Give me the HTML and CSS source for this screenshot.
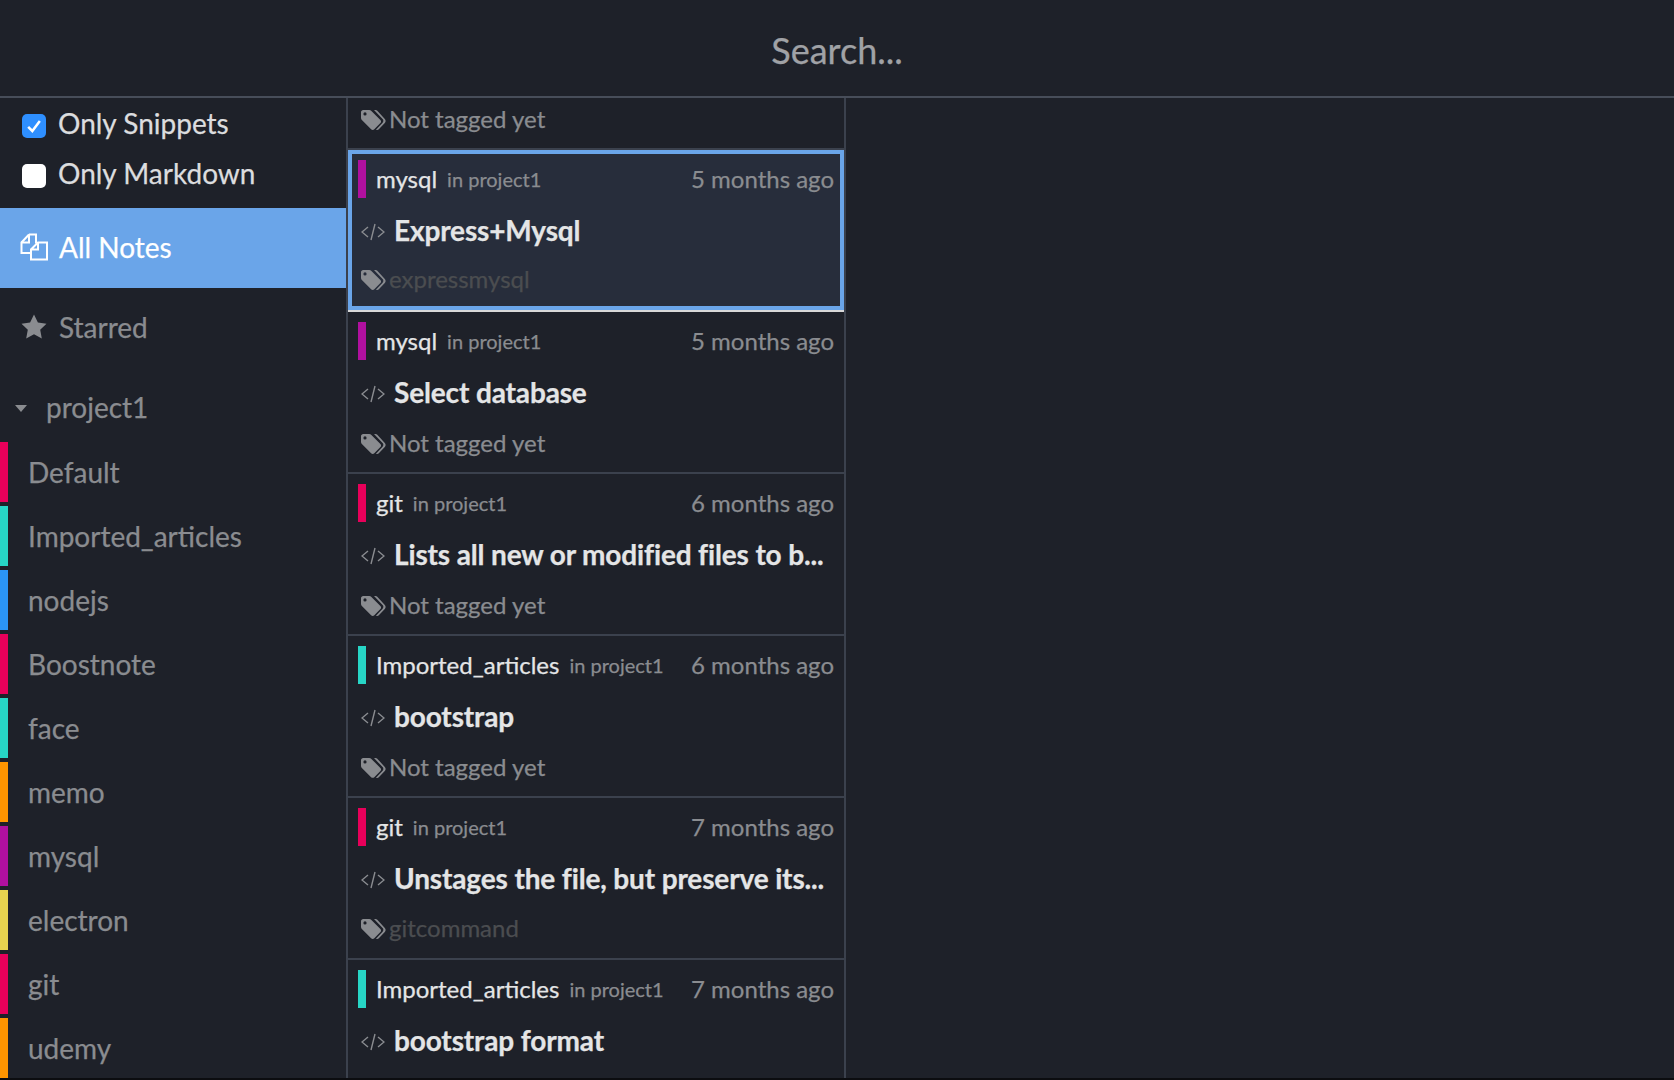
FILE: index.html
```html
<!DOCTYPE html>
<html lang="en">
<head>
    <meta charset="UTF-8">
    <title>Boostnote</title>
    <link rel="stylesheet" href="styles.css">
</head>
<body>
    <svg class="hidden">
        <symbol id="tags" viewBox="0 0 26 22">
            <path d="M1 3.2C1 2 2 1 3.2 1h6c.9 0 1.6.3 2.2.9l9 9c.9.9.9 2.300 0 3.200l-6.100 6.100c-.9.9-2.300.9-3.200 0l-9-9C1.400 10.600 1 9.900 1 9zM5 6.500a1.600 1.600 0 1 0 0-3.200 1.600 1.600 0 0 0 0 3.200z" fill-rule="evenodd"/>
            <path d="M14 1h1.600c.6 0 1.200.3 1.700.7l7.500 8.300c1.100 1.200 1.100 2.800 0 4l-6 6.300c-.8.8-1.800.9-2.800.4l6.600-7c1-1.100 1-2.500 0-3.600z"/>
        </symbol>
        <symbol id="code" viewBox="0 0 24 18">
            <path d="M7 4 1 9l6 5M17 4l6 5-6 5M14 1l-4 16" fill="none" stroke="currentColor" stroke-width="1.400"/>
        </symbol>
    </svg>

    <header class="search-bar">Search...</header>

    <div class="main">
        <aside class="sidebar">
            <div class="filters">
                <label class="filter">
                    <span class="check check-on">
                        <svg viewBox="0 0 24 24" width="20" height="20"><path d="M5 13l5 5 9-12" fill="none" stroke="#fff" stroke-width="3"/></svg>
                    </span>
                    Only Snippets
                </label>
                <label class="filter">
                    <span class="check"></span>
                    Only Markdown
                </label>
            </div>

            <div class="nav-item nav-active">
                <svg class="nav-icon" viewBox="0 0 28 28" width="28" height="28">
                    <path d="M9 1.500h7v7M16 8.500v2M11 20H1.500V9.500L9 1.500" fill="none" stroke="#fff" stroke-width="2"/>
                    <path d="M1.500 9.500H9v-8M18 9.500h9v17H11V16.500zM18 9.500v7h-7" fill="none" stroke="#fff" stroke-width="2"/>
                </svg>
                All Notes
            </div>
            <div class="nav-item">
                <svg class="nav-icon" viewBox="0 0 28 28" width="28" height="28">
                    <path d="M14 1.500l3.900 8 8.600 1.200-6.300 6 1.600 8.800-7.800-4.200-7.800 4.200 1.600-8.800-6.300-6 8.600-1.200z" fill="#8a8c90"/>
                </svg>
                Starred
            </div>
            <div class="nav-item nav-project">
                <span class="caret"></span>
                project1
            </div>

            <ul class="folders">
                <li class="folder c-red">Default</li>
                <li class="folder c-teal">Imported_articles</li>
                <li class="folder c-blue">nodejs</li>
                <li class="folder c-red">Boostnote</li>
                <li class="folder c-teal">face</li>
                <li class="folder c-orange">memo</li>
                <li class="folder c-purple">mysql</li>
                <li class="folder c-yellow">electron</li>
                <li class="folder c-red">git</li>
                <li class="folder c-orange">udemy</li>
            </ul>
        </aside>

        <section class="note-list">
            <div class="note note-cut">
                <div class="note-tags"><svg class="tag-icon" width="26" height="22"><use href="#tags"/></svg>Not tagged yet</div>
            </div>

            <div class="note note-active">
                <div class="note-head">
                    <span class="bar c-purple"></span><span class="note-folder">mysql</span><span class="note-project">in project1</span>
                    <span class="note-time">5 months ago</span>
                </div>
                <div class="note-title"><svg class="code-icon" width="24" height="18"><use href="#code"/></svg>Express+Mysql</div>
                <div class="note-tags note-tagged"><svg class="tag-icon" width="26" height="22"><use href="#tags"/></svg>expressmysql</div>
            </div>

            <div class="note">
                <div class="note-head">
                    <span class="bar c-purple"></span><span class="note-folder">mysql</span><span class="note-project">in project1</span>
                    <span class="note-time">5 months ago</span>
                </div>
                <div class="note-title"><svg class="code-icon" width="24" height="18"><use href="#code"/></svg>Select database</div>
                <div class="note-tags"><svg class="tag-icon" width="26" height="22"><use href="#tags"/></svg>Not tagged yet</div>
            </div>

            <div class="note">
                <div class="note-head">
                    <span class="bar c-red"></span><span class="note-folder">git</span><span class="note-project">in project1</span>
                    <span class="note-time">6 months ago</span>
                </div>
                <div class="note-title"><svg class="code-icon" width="24" height="18"><use href="#code"/></svg>Lists all new or modified files to b...</div>
                <div class="note-tags"><svg class="tag-icon" width="26" height="22"><use href="#tags"/></svg>Not tagged yet</div>
            </div>

            <div class="note">
                <div class="note-head">
                    <span class="bar c-teal"></span><span class="note-folder">Imported_articles</span><span class="note-project">in project1</span>
                    <span class="note-time">6 months ago</span>
                </div>
                <div class="note-title"><svg class="code-icon" width="24" height="18"><use href="#code"/></svg>bootstrap</div>
                <div class="note-tags"><svg class="tag-icon" width="26" height="22"><use href="#tags"/></svg>Not tagged yet</div>
            </div>

            <div class="note">
                <div class="note-head">
                    <span class="bar c-red"></span><span class="note-folder">git</span><span class="note-project">in project1</span>
                    <span class="note-time">7 months ago</span>
                </div>
                <div class="note-title"><svg class="code-icon" width="24" height="18"><use href="#code"/></svg>Unstages the file, but preserve its...</div>
                <div class="note-tags note-tagged"><svg class="tag-icon" width="26" height="22"><use href="#tags"/></svg>gitcommand</div>
            </div>

            <div class="note">
                <div class="note-head">
                    <span class="bar c-teal"></span><span class="note-folder">Imported_articles</span><span class="note-project">in project1</span>
                    <span class="note-time">7 months ago</span>
                </div>
                <div class="note-title"><svg class="code-icon" width="24" height="18"><use href="#code"/></svg>bootstrap format</div>
            </div>
        </section>

        <div class="detail"></div>
    </div>
</body>
</html>
```

FILE: styles.css
```css
* {
    box-sizing: border-box;
}

html, body {
    margin: 0;
    padding: 0;
    height: 1080px;
    overflow: hidden;
}

body {
    font-family: Lato, "Open Sans", sans-serif;
    background-color: #1e2129;
    color: #8a8c90;
    display: flex;
    flex-direction: column;
    -webkit-text-stroke: 0.25px;
}

.hidden {
    display: none;
}

.search-bar {
    height: 98px;
    flex-shrink: 0;
    display: flex;
    align-items: center;
    justify-content: center;
    padding-top: 4px;
    font-size: 36px;
    color: #a0a2a6;
    border-bottom: 2px solid #474d59;
}

.main {
    flex: 1;
    display: flex;
    min-height: 0;
    border-bottom: 2px solid #0c0d10;
}

/* sidebar */
.sidebar {
    width: 348px;
    flex-shrink: 0;
    overflow: hidden;
    border-right: 2px solid #3b414d;
}

.filters {
    height: 110px;
}

.filter {
    display: flex;
    align-items: center;
    gap: 12px;
    height: 50px;
    padding-left: 22px;
    font-size: 28px;
    color: #dcdddf;
}

.check {
    width: 24px;
    height: 24px;
    margin-top: 5px;
    border-radius: 5px;
    background: #fff;
    display: flex;
    align-items: center;
    justify-content: center;
}

.check-on {
    background: #2e8fff;
}

.nav-item {
    height: 80px;
    display: flex;
    align-items: center;
    gap: 11px;
    padding-left: 20px;
    padding-bottom: 2px;
    font-size: 28px;
}

.nav-icon {
    flex-shrink: 0;
}

.nav-active {
    background: #6aa5e9;
    color: #fff;
}

.nav-project {
    padding-left: 15px;
    gap: 19px;
}

.caret {
    width: 0;
    height: 0;
    margin-top: 2px;
    border-left: 6.5px solid transparent;
    border-right: 6.5px solid transparent;
    border-top: 7px solid #8a8c90;
}

.folders {
    list-style: none;
    margin: -6px 0 0;
    padding: 0;
}

.folder {
    height: 60px;
    margin-bottom: 4px;
    padding-left: 20px;
    border-left: 8px solid var(--accent);
    font-size: 28px;
    line-height: 60px;
}

.c-red { --accent: #e8005a; }
.c-teal { --accent: #27d6c6; }
.c-blue { --accent: #2b95f5; }
.c-orange { --accent: #ff9500; }
.c-purple { --accent: #b0109f; }
.c-yellow { --accent: #e6d34f; }

/* note list */
.note-list {
    width: 498px;
    flex-shrink: 0;
    overflow: hidden;
    border-right: 2px solid #3b414d;
}

.note {
    height: 162px;
    padding: 10px 10px 0;
    border-bottom: 2px solid #3b414d;
}

.note-cut {
    height: 52px;
    padding-top: 0;
}

.note-active {
    height: 160px;
    margin-bottom: 2px;
    padding: 6px 6px 0;
    background: #272d3b;
    border: 4px solid #6aa5e9;
    box-shadow: 0 2px 0 #d8d8d8;
}

.note-head {
    display: flex;
    align-items: center;
    height: 38px;
    padding-bottom: 2px;
}

.bar {
    align-self: flex-start;
    flex-shrink: 0;
    width: 8px;
    height: 38px;
    background: var(--accent);
    margin-right: 10px;
}

.note-folder {
    font-size: 24px;
    color: #e4e5e6;
    margin-right: 10px;
}

.note-project {
    font-size: 20px;
    color: #8a8c90;
    margin-top: 2px;
}

.note-time {
    margin-left: auto;
    font-size: 24px;
    color: #8a8c90;
}

.note-title {
    display: flex;
    align-items: center;
    height: 60px;
    margin-top: 2px;
    padding-left: 3px;
    gap: 9px;
    font-size: 28px;
    font-weight: 700;
    letter-spacing: -0.14px;
    color: #e4e5e6;
    white-space: nowrap;
}

.code-icon {
    color: #8a8c90;
    flex-shrink: 0;
    margin-top: 3px;
}

.note-tags {
    display: flex;
    align-items: center;
    height: 40px;
    font-size: 24px;
    color: #8a8c90;
}

.note-tagged {
    margin-top: -1px;
    color: #4b4d50;
}

.note-active .note-tags {
    margin-top: -2px;
}

.tag-icon {
    fill: #8a8c90;
    flex-shrink: 0;
    margin-top: 3px;
    margin-left: 2px;
    margin-right: 3px;
}

.detail {
    flex: 1;
}
```
